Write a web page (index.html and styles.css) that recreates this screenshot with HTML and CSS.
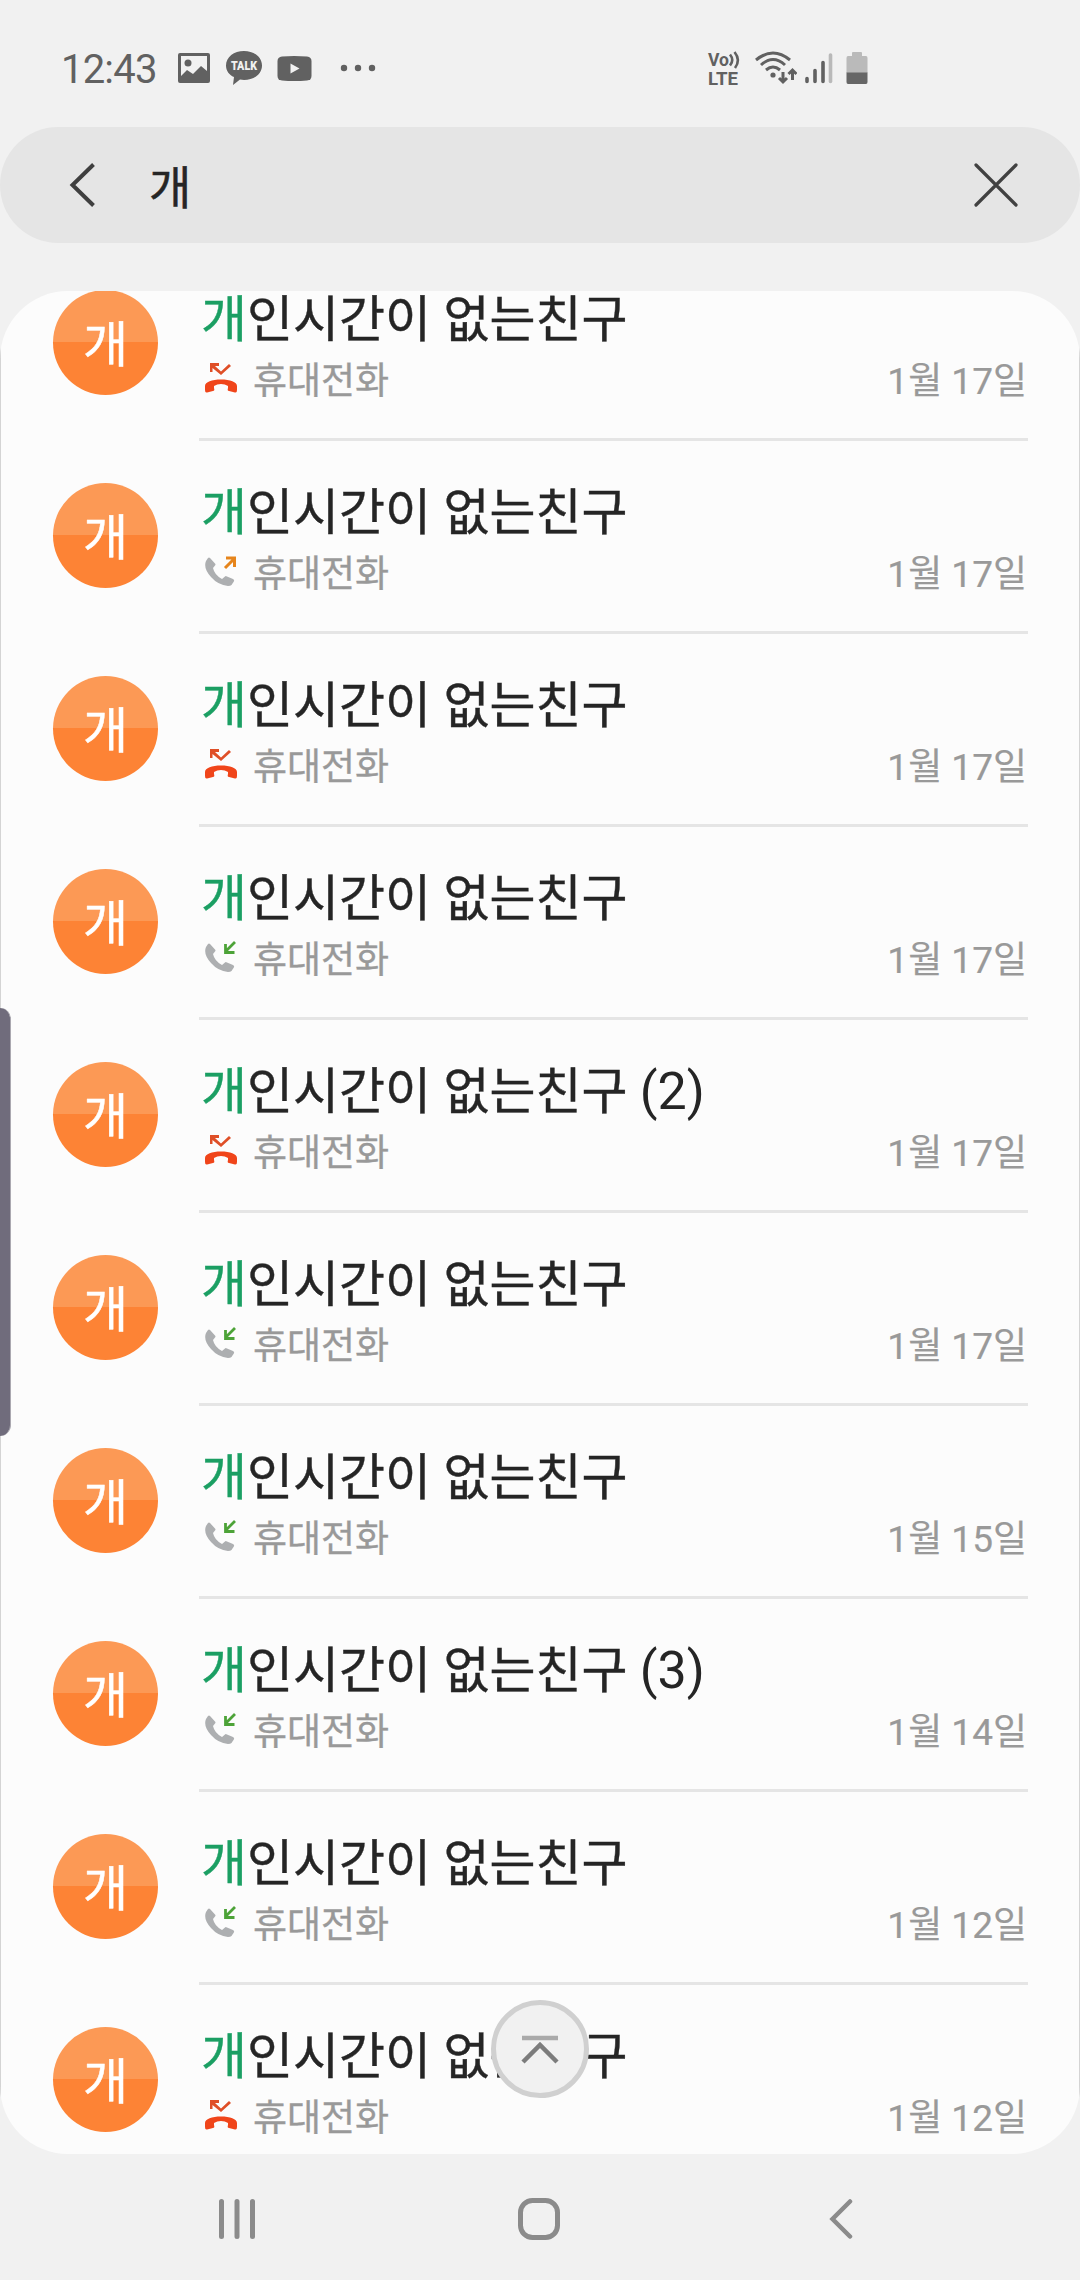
FILE: index.html
```html
<!DOCTYPE html>
<html lang="ko">
<head>
    <meta charset="UTF-8">
    <meta name="viewport" content="width=device-width, initial-scale=1.0">
    <title>통화 검색</title>
    <link rel="stylesheet" href="styles.css">
</head>
<body>

<!-- Call type icons, reused by every row -->
<svg class="sprite" aria-hidden="true">
    <symbol id="icon-missed" viewBox="0 0 32 32">
        <path d="M5 1H14V4H10L16 9.500L24 2L26 4L16 13L7.500 6V10H5Z" fill="#df4f27"/>
        <path d="M0 28V24C0 20 7 17.500 16 17.500S32 20 32 24V28Q32 31 30 30.500L24 29Q22 29 23 26V24Q20 22 16 22T9 24V26Q10 29 8 29L2 30.500Q0 31 0 28Z" fill="#f0451a"/>
    </symbol>
    <symbol id="icon-handset" viewBox="0 0 32 32">
        <path d="M5 3L10 8.500Q11 9.500 10 10.500L8 13Q9.500 20 17 24L20 21.500Q20.500 20.500 22 21.500L28 24Q30 25 28.500 27L26.500 30Q25.500 31 23 31Q13 30 6 22Q-2 13 1 6L3 3Q4 2 5 3Z" fill="#adafb1"/>
    </symbol>
    <symbol id="icon-outgoing" viewBox="0 0 32 32">
        <use href="#icon-handset"/>
        <path d="M21 3H31M29.500 1.500V12M30 3L20 13" fill="none" stroke="#e6851c" stroke-width="3"/>
    </symbol>
    <symbol id="icon-incoming" viewBox="0 0 32 32">
        <use href="#icon-handset"/>
        <path d="M30 1L20.500 10.500M20.500 3V11.500H29.500" fill="none" stroke="#4da338" stroke-width="2.800"/>
    </symbol>
</svg>

<div class="screen">
    <header class="status-bar">
        <div class="status-left">
            <span class="clock">12:43</span>
            <svg class="status-picture" width="32" height="30" viewBox="0 0 32 30">
                <path fill-rule="evenodd" d="M2 0H30Q32 0 32 2V28Q32 30 30 30H2Q0 30 0 28V2Q0 0 2 0ZM3 3V23L9 17L15 21L23 13L29 18V3Z" fill="#616161"/>
                <circle cx="10" cy="10" r="3.500" fill="#616161"/>
            </svg>
            <svg class="status-talk" width="36" height="34" viewBox="0 0 36 34">
                <path d="M18 0C28 0 36 6 36 14.500S28 29 18 29L14 28.500L7 34L8 26C3 24 0 19.500 0 14.500C0 6 8 0 18 0Z" fill="#616161"/>
                <text x="18" y="19" text-anchor="middle" textLength="26" lengthAdjust="spacingAndGlyphs" class="talk-text">TALK</text>
            </svg>
            <svg class="status-video" width="35" height="25" viewBox="0 0 35 25">
                <path d="M5 .5Q17 -.5 30 .5Q34.500 1 34.500 5V20Q34.500 24 30 24.500Q17 25.500 5 24.500Q.5 24 .5 20V5Q.5 1 5 .5Z" fill="#616161"/>
                <path d="M13.500 7.500L22.500 12.500L13.500 17.500Z" fill="#f1f1f1"/>
            </svg>
            <svg width="36" height="8" viewBox="0 0 36 8" fill="#616161">
                <circle cx="4" cy="4" r="3.200"/>
                <circle cx="18" cy="4" r="3.200"/>
                <circle cx="32" cy="4" r="3.200"/>
            </svg>
        </div>
        <div class="status-right">
            <svg class="status-volte" width="34" height="34" viewBox="0 0 34 34">
                <text x="0" y="15" textLength="21" lengthAdjust="spacingAndGlyphs" class="volte-text">Vo</text>
                <text x="0" y="33.500" textLength="30" lengthAdjust="spacingAndGlyphs" class="volte-text">LTE</text>
                <path d="M22 3.500Q26.500 9 22 14.500M26.500 1Q33 9 27 17" fill="none" stroke="#616161" stroke-width="2.600"/>
            </svg>
            <svg class="status-wifi" width="42" height="34" viewBox="0 0 42 34" fill="none" stroke="#616161" stroke-width="3">
                <path d="M1 9Q18 -5 35 9M6 14Q18 3 30 14M11 19Q18 13 25 19"/>
                <circle cx="18" cy="24" r="2.600" fill="#616161" stroke="none"/>
                <path d="M28 21V31M24 27L28 31L32 27M37.500 29V19M33.500 23L37.500 19L41.500 23"/>
            </svg>
            <svg class="status-signal" width="28" height="32" viewBox="0 0 28 32" stroke="#616161" stroke-width="3.600" stroke-linecap="round">
                <path d="M2 26.500V29.500M10 18.500V29.500M18 10.500V29.500"/>
                <path d="M25.500 3V29.500" stroke="#b9b9b9"/>
            </svg>
            <svg width="22" height="34" viewBox="0 0 22 34">
                <path d="M6 2Q6 1 7 1H15Q16 1 16 2V5H20Q21.500 5 21.500 7V22H.5V7Q.5 5 2 5H6Z" fill="#bababa"/>
                <path d="M.5 21.500H21.500V31Q21.500 33 20 33H2Q.5 33 .5 31Z" fill="#666"/>
            </svg>
        </div>
    </header>

    <div class="search-bar">
        <svg class="back-icon" width="28" height="46" viewBox="0 0 28 46">
            <path d="M24.500 2.500L3.500 23L24.500 43.500" fill="none" stroke="#3f3f3f" stroke-width="4"/>
        </svg>
        <span class="query">개</span>
        <svg width="44" height="44" viewBox="0 0 44 44">
            <path d="M2 2L42 42M42 2L2 42" stroke="#414141" stroke-width="3.200" stroke-linecap="round"/>
        </svg>
    </div>

    <main class="panel">
        <ul class="call-list" id="call-list"></ul>
    </main>

    <nav class="nav-bar">
        <svg width="36" height="42" viewBox="0 0 36 42">
            <path d="M2.500 3.500V38.500M18 3.500V38.500M33.500 3.500V38.500" stroke="#8b8b8b" stroke-width="5" stroke-linecap="round"/>
        </svg>
        <svg class="nav-home" width="42" height="42" viewBox="0 0 42 42">
            <rect x="2.500" y="2.500" width="37" height="37" rx="12" fill="none" stroke="#8b8b8b" stroke-width="5"/>
        </svg>
        <svg width="24" height="42" viewBox="0 0 24 42">
            <path d="M21 3.500L3.500 21L21 38.500" fill="none" stroke="#8b8b8b" stroke-width="4.500" stroke-linecap="round"/>
        </svg>
    </nav>

    <div class="edge-handle"></div>
    <div class="scroll-top">
        <svg width="38" height="30" viewBox="0 0 38 30" fill="none">
            <path d="M1 4H37" stroke="#aaa" stroke-width="4.500"/>
            <path d="M2 28L19 11L36 28" stroke="#7c7c7c" stroke-width="4.500"/>
        </svg>
    </div>
</div>

<script>
    const calls = [
        { type: 'missed', date: '1월 17일' },
        { type: 'outgoing', date: '1월 17일' },
        { type: 'missed', date: '1월 17일' },
        { type: 'incoming', date: '1월 17일' },
        { type: 'missed', date: '1월 17일', count: 2 },
        { type: 'incoming', date: '1월 17일' },
        { type: 'incoming', date: '1월 15일' },
        { type: 'incoming', date: '1월 14일', count: 3 },
        { type: 'incoming', date: '1월 12일' },
        { type: 'missed', date: '1월 12일' }
    ];

    document.getElementById('call-list').innerHTML = calls.map(call => `
        <li class="call">
            <div class="avatar">개</div>
            <div class="call-body">
                <div class="call-name"><span class="match">개</span>인시간이 없는친구${call.count ? ` <span class="count">(${call.count})</span>` : ''}</div>
                <div class="call-info">
                    <svg class="call-icon"><use href="#icon-${call.type}"/></svg>
                    <span class="call-label">휴대전화</span>
                    <span class="call-date">${call.date}</span>
                </div>
            </div>
        </li>`).join('');
</script>

</body>
</html>
```
FILE: styles.css
```css
* {
    box-sizing: border-box;
}
body {
    margin: 0;
    background-color: #f1f1f1;
    font-family: Roboto, "Noto Sans CJK KR", sans-serif;
    color: #252525;
}
svg {
    display: block;
    flex-shrink: 0;
}
.sprite {
    position: absolute;
    width: 0;
    height: 0;
}
.screen {
    position: relative;
    width: 1080px;
    height: 2280px;
    display: flex;
    flex-direction: column;
    overflow: hidden;
}

/* Status bar */
.status-bar {
    height: 127px;
    padding: 9px 212px 0 61px;
    display: flex;
    justify-content: space-between;
    align-items: center;
}
.status-left, .status-right {
    display: flex;
    align-items: center;
}
.clock {
    width: 117px;
    padding-top: 3px;
    font-size: 40px;
    line-height: 48px;
    letter-spacing: -0.8px;
    color: #616161;
}
.status-talk {
    margin-left: 16px;
}
.status-video {
    margin: 0 28px 0 15px;
}
.talk-text {
    font-size: 12px;
    font-weight: 900;
    fill: #f1f1f1;
}
.status-volte {
    overflow: visible;
}
.volte-text {
    font-size: 19px;
    font-weight: 700;
    fill: #616161;
}
.status-wifi {
    margin-left: 13px;
}
.status-signal {
    margin: 0 13px 0 8px;
}

/* Search */
.search-bar {
    height: 116px;
    padding: 0 62px 0 69px;
    display: flex;
    align-items: center;
    background-color: #e5e5e5;
    border-radius: 58px;
}
.query {
    flex: 1;
    margin-left: 52px;
    padding-top: 5px;
    font-size: 46px;
    line-height: 60px;
    -webkit-text-stroke: 0.5px;
}

/* Call log */
.panel {
    height: 1863px;
    margin-top: 48px;
    background: linear-gradient(90deg, #d4d4d4 1px, #fcfcfc 1px, #fcfcfc 1079px, #d4d4d4 1079px);
    border-radius: 68px;
    overflow: hidden;
}
.call-list {
    list-style: none;
    margin: -43px 0 0;
    padding: 0 52px 0 53px;
}
.call {
    display: flex;
    height: 193px;
}
.avatar {
    width: 105px;
    height: 105px;
    margin: 42px 41px 0 0;
    border-radius: 50%;
    background: linear-gradient(#fc9955 50%, #fd8335 50%);
    color: #fff;
    font-size: 49px;
    line-height: 112px;
    text-align: center;
    -webkit-text-stroke: 0.5px;
}
.call-body {
    flex: 1;
    padding: 45px 1px 0 2px;
    border-bottom: 3px solid #e5e5e5;
}
.call-name {
    font-size: 50px;
    line-height: 54px;
    white-space: nowrap;
    -webkit-text-stroke: 0.4px;
}
.match {
    color: #1b9f63;
}
.count {
    font-size: 52px;
    line-height: 1;
    -webkit-text-stroke: 0;
}
.call-info {
    display: flex;
    align-items: center;
    height: 61px;
    color: #999;
}
.call-icon {
    width: 32px;
    height: 32px;
    margin: 0 16px 0 4px;
}
.call-label {
    padding-top: 1px;
    font-size: 37px;
    -webkit-text-stroke: 0.3px;
}
.call-date {
    margin-left: auto;
    font-size: 37px;
    -webkit-text-stroke: 0.2px;
}

/* Navigation bar */
.nav-bar {
    flex: 1;
    padding: 4px 227px 0 219px;
    display: flex;
    justify-content: space-between;
    align-items: center;
}
.nav-home {
    margin-right: 6px;
}

/* Overlays */
.edge-handle {
    position: absolute;
    left: 0;
    top: 1008px;
    width: 11px;
    height: 428px;
    background-color: #706c7c;
    border-right: 1px solid #aaa8b0;
    border-radius: 0 11px 11px 0;
}
.scroll-top {
    position: absolute;
    left: 491px;
    top: 2000px;
    width: 98px;
    height: 98px;
    display: flex;
    justify-content: center;
    align-items: center;
    background-color: #f1f1f1;
    border: 5px solid #d0d0d0;
    border-radius: 50%;
}
```
